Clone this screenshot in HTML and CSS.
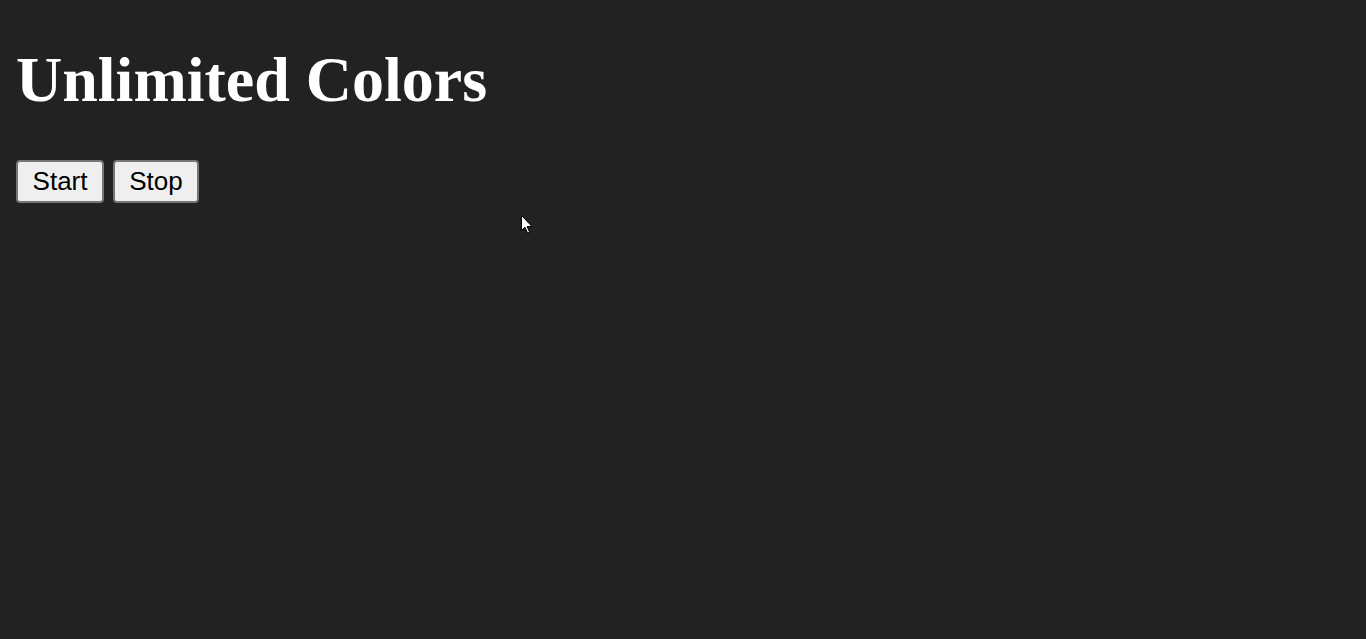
FILE: index.html
```html
<!DOCTYPE html>
<html lang="en">
<head>
<meta charset="utf-8">
<title>Unlimited Colors</title>
<link rel="stylesheet" href="styles.css">
</head>
<body>
<h1 class="title">Unlimited Colors</h1>
<div class="controls">
  <button class="btn" type="button">Start</button>
  <button class="btn" type="button">Stop</button>
</div>
<svg class="cursor" width="12" height="19" viewBox="0 0 12 19" aria-hidden="true">
  <path d="M0.5 0.5 L0.5 15.5 L4 12.2 L6.6 18 L8.6 17.1 L6.1 11.5 L11 11.5 Z" fill="#fff" stroke="#000" stroke-width="1"/>
</svg>
</body>
</html>
```
FILE: styles.css
```css
html, body {
  background: #222222;
}
body {
  margin: 0 16px;
  color: #ffffff;
  font-family: "Liberation Serif", "Times New Roman", serif;
}
.title {
  font-size: 64px;
  font-weight: bold;
  margin: 43px 0 43px 0;
  line-height: normal;
}
.controls {
  display: flex;
  gap: 8.5px;
}
.btn {
  font-family: "Liberation Sans", Arial, sans-serif;
  font-size: 26px;
  color: #000;
  background: #efefef;
  border: 2px solid #767676;
  border-radius: 4px;
  padding: 4px 14.6px;
  line-height: normal;
}
.cursor {
  position: absolute;
  left: 521px;
  top: 215px;
}
```
